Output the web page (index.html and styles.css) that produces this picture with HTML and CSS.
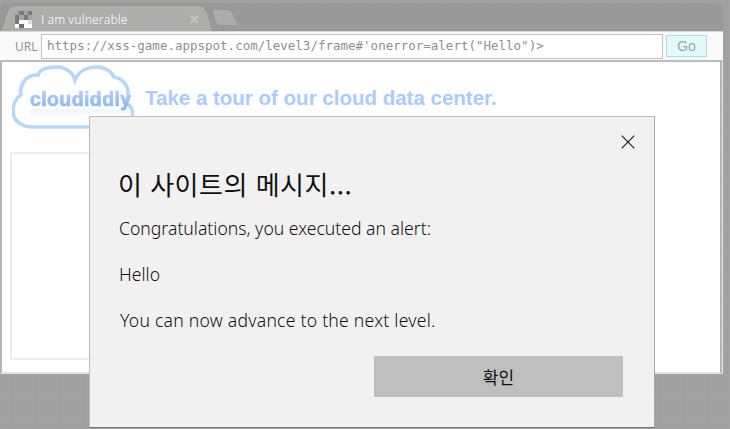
FILE: index.html
```html
<!DOCTYPE html>
<html lang="ko">
<head>
    <meta charset="UTF-8">
    <meta name="viewport" content="width=device-width, initial-scale=1.0">
    <title>I am vulnerable</title>
    <link rel="stylesheet" href="styles.css">
</head>
<body>
    <div class="browser">
        <div class="tabstrip">
            <div class="tab">
                <svg class="favicon" width="17" height="17" viewBox="0 0 4 4" shape-rendering="crispEdges">
                    <rect x="0" y="0" width="1" height="1" fill="#a4a4a4"/>
                    <rect x="1" y="0" width="1" height="1" fill="#7a7a7a"/>
                    <rect x="2" y="0" width="1" height="1" fill="#a4a4a4"/>
                    <rect x="3" y="0" width="1" height="1" fill="#7a7a7a"/>
                    <rect x="0" y="1" width="1" height="1" fill="#7a7a7a"/>
                    <rect x="1" y="1" width="1" height="1" fill="#a4a4a4"/>
                    <rect x="2" y="1" width="1" height="1" fill="#7a7a7a"/>
                    <rect x="3" y="1" width="1" height="1" fill="#a4a4a4"/>
                    <rect x="0" y="2" width="1" height="1" fill="#7a7a7a"/>
                    <rect x="1" y="2" width="1" height="1" fill="#fafafa"/>
                    <rect x="2" y="2" width="1" height="1" fill="#fafafa"/>
                    <rect x="3" y="2" width="1" height="1" fill="#dcdcdc"/>
                    <rect x="0" y="3" width="1" height="1" fill="#fcfcfc"/>
                    <rect x="1" y="3" width="1" height="1" fill="#6e6e6e"/>
                    <rect x="2" y="3" width="1" height="1" fill="#fcfcfc"/>
                    <rect x="3" y="3" width="1" height="1" fill="#fcfcfc"/>
                </svg>
                <span class="tab-title">I am vulnerable</span>
                <svg class="tab-close" width="9" height="9" viewBox="0 0 9 9">
                    <path d="M1 1 8 8M8 1 1 8" stroke="#c6c6c6" stroke-width="2"/>
                </svg>
            </div>
            <div class="newtab"></div>
        </div>

        <div class="addressbar">
            <label class="url-label">URL</label>
            <div class="url-input">https://xss-game.appspot.com/level3/frame#'onerror=alert("Hello")&gt;</div>
            <div class="go">Go</div>
        </div>

        <div class="viewport">
            <div class="page-head">
                <svg class="logo" width="122" height="68" viewBox="0 0 122 68">
                    <defs>
                        <linearGradient id="logoText" x1="0" y1="0" x2="0" y2="1">
                            <stop offset="0" stop-color="#b8d4fb"/>
                            <stop offset="1" stop-color="#86b2f2"/>
                        </linearGradient>
                        <linearGradient id="logoShine" x1="0" y1="0" x2="0" y2="1">
                            <stop offset="0" stop-color="#b8d4fb" stop-opacity="0.22"/>
                            <stop offset="1" stop-color="#b8d4fb" stop-opacity="0"/>
                        </linearGradient>
                    </defs>
                    <path class="cloud" d="M21 62 C10 62 1 56 1 46 C1 38 5 32 9 30 C7 20 14 9 26 10 C28 4 36 2 45 2 C54 2 61 8 63 15 C66 7 74 2 85 2 C93 2 100 7 102 12 C110 13 116 20 116 28 C116 32 115 35 113 37 C118 40 121 45 121 50 C121 57 116 62 108 62 Z"/>
                    <rect x="18" y="44" width="102" height="9" fill="url(#logoShine)"/>
                    <text class="logo-text" x="18" y="41" fill="url(#logoText)" stroke="url(#logoText)">cloudiddly</text>
                </svg>
                <h1>Take a tour of our cloud data center.</h1>
            </div>
            <div class="card"></div>
        </div>
    </div>

    <div class="dialog">
        <svg class="dialog-close" width="14" height="14" viewBox="0 0 14 14">
            <path d="M.7.7 13.3 13.3M13.3.7.7 13.3" stroke="#222" stroke-width="1.2"/>
        </svg>
        <h2>이 사이트의 메시지...</h2>
        <p>Congratulations, you executed an alert:</p>
        <p>Hello</p>
        <p class="next-level">You can now advance to the next level.</p>
        <div class="dialog-actions">
            <button type="button">확인</button>
        </div>
    </div>
</body>
</html>
```

FILE: styles.css
```css
html, body {
    margin: 0;
    height: 100%;
}
body {
    position: relative;
    width: 730px;
    height: 429px;
    overflow: hidden;
    background-color: #a2a2a2;
    background-image: radial-gradient(#989898 0.6px, transparent 0.7px);
    background-size: 3px 3px;
    font-family: "Noto Sans", "Noto Sans CJK KR", sans-serif;
}
.browser {
    width: 723px;
    height: 374px;
    padding-top: 3px;
    box-sizing: border-box;
    display: flex;
    flex-direction: column;
}

/* tab strip */
.tabstrip {
    height: 28px;
    background: #999;
    border-radius: 6px 6px 0 0;
    display: flex;
    align-items: flex-end;
    padding-left: 2px;
    flex: none;
}
.tab {
    width: 210px;
    height: 26px;
    background: #adadab;
    clip-path: polygon(0 100%, 5px 8px, 8px 3px, 12px 1px, 198px 1px, 202px 3px, 205px 8px, 210px 100%);
    display: flex;
    align-items: center;
    padding: 2px 0 0 13px;
    box-sizing: border-box;
}
.favicon {
    flex: none;
}
.tab-title {
    margin-left: 9px;
    font-family: "Open Sans", sans-serif;
    font-size: 12px;
    color: #ececec;
    width: 149px;
}
.tab-close {
    flex: none;
}
.newtab {
    width: 25px;
    height: 15px;
    margin: 0 0 6px 1px;
    background: #acacac;
    clip-path: polygon(0 0, 15px 0, 18px 2px, 25px 100%, 6px 100%, 3px 80%);
}

/* address bar */
.addressbar {
    height: 31px;
    flex: none;
    box-sizing: border-box;
    background: #fafafa;
    border-top: 1px solid #d8d8d8;
    border-bottom: 2px solid #bdbdbd;
    display: flex;
    align-items: center;
    padding-left: 15px;
}
.url-label {
    font-family: "Open Sans", sans-serif;
    font-size: 12px;
    color: #8d8d8d;
    width: 26px;
}
.url-input {
    width: 622px;
    height: 25px;
    box-sizing: border-box;
    background: #fff;
    border: 1px solid #c4c4c4;
    font-family: "DejaVu Sans Mono", monospace;
    font-size: 12.5px;
    line-height: 22px;
    color: #8f8f8f;
    padding-left: 5px;
    white-space: nowrap;
}
.go {
    width: 41px;
    height: 22px;
    margin-left: 3px;
    box-sizing: border-box;
    background: #e0fbfd;
    border: 1px solid #b0dcea;
    font-family: "Liberation Sans", sans-serif;
    font-size: 14px;
    line-height: 20px;
    text-align: center;
    color: #a4a4a4;
}

/* page inside the frame */
.viewport {
    flex: 1;
    background: #fff;
    border-left: 2px solid #b4b4b4;
    border-right: 2px solid #b4b4b4;
    border-bottom: 2px solid #e4e4e4;
    margin-right: 1px;
    box-shadow: 1px 0 0 #e8e8e8;
    padding: 0 0 0 8px;
    min-height: 0;
}
.page-head {
    display: flex;
    height: 90px;
    padding-left: 2px;
}
.logo {
    flex: none;
    margin-top: 3px;
}
.cloud {
    fill: #fff;
    stroke: #b2d8fd;
    stroke-width: 3.5;
}
.logo-text {
    font-family: "Liberation Sans", sans-serif;
    font-weight: bold;
    font-size: 19.5px;
    letter-spacing: 0.4px;
    stroke-width: 0.7;
    filter: blur(0.35px);
}
h1 {
    margin: 24px 0 0 11px;
    font-family: "Liberation Sans", sans-serif;
    font-size: 20.5px;
    line-height: 24px;
    font-weight: bold;
    color: #a9ccff;
    white-space: nowrap;
}
.card {
    width: 600px;
    height: 208px;
    box-sizing: border-box;
    border: 2px solid #ececec;
}

/* alert dialog */
.dialog {
    position: absolute;
    left: 89px;
    top: 116px;
    width: 566px;
    height: 312px;
    box-sizing: border-box;
    background: #f1f1f1;
    border: 1px solid #bdbdbd;
    border-bottom-color: #777;
    border-right-color: #a8a8a8;
    padding: 50px 31px 0 29px;
    color: #111;
}
.dialog-close {
    position: absolute;
    top: 18px;
    right: 19px;
}
.dialog h2 {
    margin: 0 0 15px -1px;
    font-family: "Noto Sans CJK KR", sans-serif;
    font-size: 26px;
    line-height: 34px;
    font-weight: 400;
    letter-spacing: 0.5px;
    color: #111;
    white-space: nowrap;
}
.dialog p {
    margin: 0 0 22px;
    font-size: 17.6px;
    line-height: 24px;
    font-weight: 300;
}
.dialog .next-level {
    margin-left: 1px;
    letter-spacing: 0.24px;
}
.dialog-actions {
    display: flex;
    justify-content: flex-end;
    margin-top: 24px;
}
.dialog button {
    width: 249px;
    height: 41px;
    border: none;
    background: #bfbfbf;
    font-family: "Noto Sans CJK KR", sans-serif;
    font-size: 17px;
    color: #111;
    padding: 0;
}
```
